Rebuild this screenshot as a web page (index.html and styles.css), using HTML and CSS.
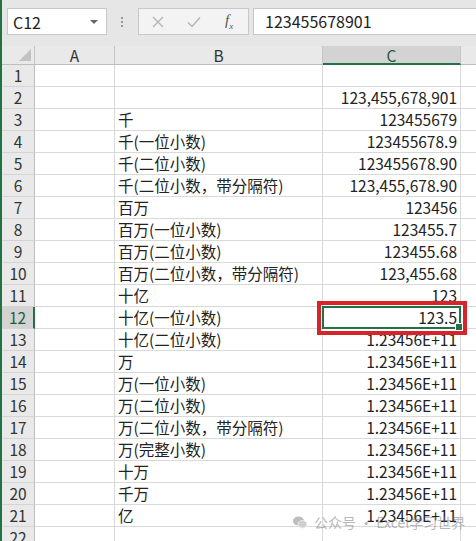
FILE: index.html
```html
<!DOCTYPE html>
<html lang="zh-CN">
<head>
  <meta charset="UTF-8" />
  <title>数字格式 - 千/百万/十亿</title>
  <link rel="stylesheet" href="styles.css">
</head>
<body>
  <div class="app">
    <div class="formula-bar">
      <div class="name-box">
        <span>C12</span>
        <span class="caret"></span>
      </div>
      <div class="grip"><i></i><i></i><i></i></div>
      <div class="fx-buttons">
        <svg class="btn-icon cancel" width="14" height="14" viewBox="0 0 14 14"><path d="M2 2 L12 12 M12 2 L2 12" stroke="#b4b4b4" stroke-width="1.4" fill="none"/></svg>
        <svg class="btn-icon enter" width="16" height="14" viewBox="0 0 16 14"><path d="M2 7.5 L6 11.5 L14 2.5" stroke="#b4b4b4" stroke-width="1.4" fill="none"/></svg>
        <span class="fx">f<sub>x</sub></span>
      </div>
      <div class="formula-input">123455678901</div>
    </div>

    <div class="sheet">
      <div class="corner"><span class="tri"></span></div>
      <div class="col-head">A</div>
      <div class="col-head">B</div>
      <div class="col-head active">C</div>
      <div class="col-head rest"></div>

      <div class="row-head">1</div><div class="cell"></div><div class="cell"></div><div class="cell num"></div><div class="cell rest"></div>
      <div class="row-head">2</div><div class="cell"></div><div class="cell"></div><div class="cell num">123,455,678,901</div><div class="cell rest"></div>
      <div class="row-head">3</div><div class="cell"></div><div class="cell">千</div><div class="cell num">123455679</div><div class="cell rest"></div>
      <div class="row-head">4</div><div class="cell"></div><div class="cell">千(一位小数)</div><div class="cell num">123455678.9</div><div class="cell rest"></div>
      <div class="row-head">5</div><div class="cell"></div><div class="cell">千(二位小数)</div><div class="cell num">123455678.90</div><div class="cell rest"></div>
      <div class="row-head">6</div><div class="cell"></div><div class="cell">千(二位小数，带分隔符)</div><div class="cell num">123,455,678.90</div><div class="cell rest"></div>
      <div class="row-head">7</div><div class="cell"></div><div class="cell">百万</div><div class="cell num">123456</div><div class="cell rest"></div>
      <div class="row-head">8</div><div class="cell"></div><div class="cell">百万(一位小数)</div><div class="cell num">123455.7</div><div class="cell rest"></div>
      <div class="row-head">9</div><div class="cell"></div><div class="cell">百万(二位小数)</div><div class="cell num">123455.68</div><div class="cell rest"></div>
      <div class="row-head">10</div><div class="cell"></div><div class="cell">百万(二位小数，带分隔符)</div><div class="cell num">123,455.68</div><div class="cell rest"></div>
      <div class="row-head">11</div><div class="cell"></div><div class="cell">十亿</div><div class="cell num">123</div><div class="cell rest"></div>
      <div class="row-head active">12</div><div class="cell"></div><div class="cell">十亿(一位小数)</div><div class="cell num selected">123.5<span class="handle"></span></div><div class="cell rest"></div>
      <div class="row-head">13</div><div class="cell"></div><div class="cell">十亿(二位小数)</div><div class="cell num">1.23456E+11</div><div class="cell rest"></div>
      <div class="row-head">14</div><div class="cell"></div><div class="cell">万</div><div class="cell num">1.23456E+11</div><div class="cell rest"></div>
      <div class="row-head">15</div><div class="cell"></div><div class="cell">万(一位小数)</div><div class="cell num">1.23456E+11</div><div class="cell rest"></div>
      <div class="row-head">16</div><div class="cell"></div><div class="cell">万(二位小数)</div><div class="cell num">1.23456E+11</div><div class="cell rest"></div>
      <div class="row-head">17</div><div class="cell"></div><div class="cell">万(二位小数，带分隔符)</div><div class="cell num">1.23456E+11</div><div class="cell rest"></div>
      <div class="row-head">18</div><div class="cell"></div><div class="cell">万(完整小数)</div><div class="cell num">1.23456E+11</div><div class="cell rest"></div>
      <div class="row-head">19</div><div class="cell"></div><div class="cell">十万</div><div class="cell num">1.23456E+11</div><div class="cell rest"></div>
      <div class="row-head">20</div><div class="cell"></div><div class="cell">千万</div><div class="cell num">1.23456E+11</div><div class="cell rest"></div>
      <div class="row-head">21</div><div class="cell"></div><div class="cell">亿</div><div class="cell num">1.23456E+11</div><div class="cell rest"></div>
      <div class="row-head">22</div><div class="cell"></div><div class="cell"></div><div class="cell num"></div><div class="cell rest"></div>

      <!-- 标注框 -->
      <div class="mark"></div>
    </div>

    <div class="watermark">
      <svg width="14" height="13" viewBox="0 0 14 13">
        <ellipse cx="5.5" cy="5" rx="5.5" ry="4.6" fill="#bdbdbd"/>
        <ellipse cx="9.5" cy="8.3" rx="4.5" ry="3.8" fill="#cfcfcf" stroke="#f4f4f4" stroke-width="0.8"/>
      </svg>
      <span>公众号 · Excel学习世界</span>
    </div>
  </div>
</body>
</html>
```

FILE: styles.css
```css
body {
  margin: 0;
  font-family: "Noto Sans CJK SC", "Noto Sans", sans-serif;
  color: #222;
}
.app {
  position: relative;
  width: 476px;
  height: 541px;
  overflow: hidden;
  background: #fff;
  border-left: 2px solid #217346;
  box-sizing: border-box;
}

/* 编辑栏 */
.formula-bar {
  display: flex;
  align-items: center;
  height: 46px;
  padding: 0 0 3px 5px;
  box-sizing: border-box;
  background: #e6e6e6;
}
.name-box {
  display: flex;
  align-items: center;
  justify-content: space-between;
  width: 100px;
  height: 27px;
  padding: 0 8px 0 5px;
  box-sizing: border-box;
  background: #fff;
  border: 1px solid #c8c8c8;
  font-size: 16px;
}
.caret {
  width: 0;
  height: 0;
  border-left: 4px solid transparent;
  border-right: 4px solid transparent;
  border-top: 4px solid #666;
}
.grip {
  display: flex;
  flex-direction: column;
  gap: 2px;
  margin: 0 15px 0 14px;
}
.grip i {
  display: block;
  width: 2px;
  height: 2px;
  background: #999;
}
.fx-buttons {
  display: flex;
  align-items: center;
  width: 111px;
  height: 27px;
  box-sizing: border-box;
  background: #f3f3f3;
  border: 1px solid #c8c8c8;
}
.btn-icon.cancel {
  margin-left: 12px;
}
.btn-icon.enter {
  margin-left: 21px;
}
.fx {
  margin-left: 23px;
  font-family: "Liberation Serif", serif;
  font-style: italic;
  font-size: 15px;
  color: #555;
}
.fx sub {
  font-size: 9px;
}
.formula-input {
  flex: 1;
  height: 27px;
  margin-left: 4px;
  padding-left: 11px;
  box-sizing: border-box;
  background: #fff;
  border: 1px solid #c8c8c8;
  border-right: none;
  font-size: 16px;
  line-height: 25px;
}

/* 工作表网格 */
.sheet {
  position: relative;
  display: grid;
  grid-template-columns: 33px 80px 208px 138px 1fr;
  grid-template-rows: 19px repeat(22, 22px);
  font-size: 15.5px;
}
.corner,
.col-head,
.row-head {
  background: #e9e9e9;
  color: #333;
  box-sizing: border-box;
}
.corner {
  position: relative;
  border-right: 1px solid #c6c6c6;
  border-bottom: 1px solid #bdbdbd;
}
.tri {
  position: absolute;
  right: 3px;
  bottom: 3px;
  width: 0;
  height: 0;
  border-left: 12px solid transparent;
  border-bottom: 12px solid #c2c2c2;
}
.col-head {
  text-align: center;
  line-height: 18px;
  border-right: 1px solid #c6c6c6;
  border-bottom: 1px solid #bdbdbd;
}
.col-head.active {
  background: #d3d3d3;
  color: #1f5d3a;
  border-bottom: 2px solid #217346;
}
.col-head.rest {
  border-right: none;
}
.row-head {
  text-align: center;
  line-height: 21px;
  border-right: 1px solid #bdbdbd;
  border-bottom: 1px solid #d4d4d4;
}
.row-head.active {
  background: #d3d3d3;
  color: #1f5d3a;
  border-right: 2px solid #217346;
}
.cell {
  padding: 0 3px;
  line-height: 21px;
  white-space: nowrap;
  border-right: 1px solid #d9d9d9;
  border-bottom: 1px solid #d9d9d9;
  box-sizing: border-box;
}
.cell.num {
  text-align: right;
}
.cell.rest {
  border-right: none;
}
.cell.selected {
  position: relative;
  border: 2px solid #217346;
  line-height: 18px;
  margin: -1px 0 0 -1px;
  padding-right: 2px;
}
.handle {
  position: absolute;
  right: -4px;
  bottom: -4px;
  width: 6px;
  height: 6px;
  background: #217346;
  border: 1px solid #fff;
}
.mark {
  position: absolute;
  left: 315px;
  top: 255px;
  width: 150px;
  height: 34px;
  border: 4px solid #d6242a;
  box-sizing: border-box;
  pointer-events: none;
}

.watermark {
  position: absolute;
  left: 291px;
  top: 512px;
  display: flex;
  align-items: center;
  gap: 7px;
  font-size: 14px;
  color: rgba(120, 120, 120, 0.55);
}
```
